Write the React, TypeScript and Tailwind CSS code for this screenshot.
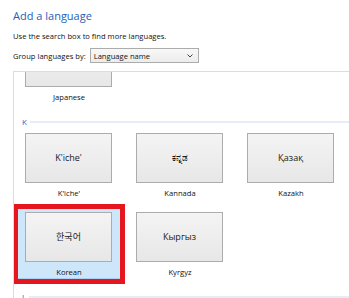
import React from "react";

type Lang = { native: string; name: string; selected?: boolean };

const font = "font-['Segoe_UI','Open_Sans','Noto_Sans_CJK_KR',sans-serif]";

function Tile({ lang }: { lang: Lang }) {
  return (
    <div
      className={
        "relative w-[102px] px-[7px] pt-[3px] border-b " +
        (lang.selected
          ? "bg-[#cde6fa] border-[#a9d0f2] outline-[5px] outline-[#e5161e]"
          : "border-transparent")
      }
    >
      <div className="flex h-[50px] w-[87px] items-center justify-center border border-[#acacac] bg-gradient-to-b from-[#f4f4f4] to-[#e7e7e7] text-[9px] text-[#1a1a1a]">
        {lang.native}
      </div>
      <div className="mt-[4px] h-[12px] text-center text-[7.6px] leading-[12px] text-[#111]">
        {lang.name}
      </div>
    </div>
  );
}

function Heading({ letter }: { letter: string }) {
  return (
    <div className="mt-[13px] flex h-[10px] items-center pl-[8px]">
      <span className="text-[8px] leading-[10px] text-[#4b57d0]">{letter}</span>
      <div className="ml-[3px] h-[2px] flex-1 bg-[#e6edf6]" />
    </div>
  );
}

const kLangs: Lang[] = [
  { native: "K'iche'", name: "K'iche'" },
  { native: "ಕನ್ನಡ", name: "Kannada" },
  { native: "Қазақ", name: "Kazakh" },
  { native: "한국어", name: "Korean", selected: true },
  { native: "Кыргыз", name: "Kyrgyz" },
];

export default function App() {
  return (
    <div className={"h-[298px] w-[349px] overflow-hidden bg-white " + font}>
      <div className="pl-[13px] pt-[8px]">
        <h1 className="text-[11px] leading-[16px] text-[#2561b4]">
          Add a language
        </h1>
        <p className="mt-[6px] text-[7.6px] leading-[12px] text-[#111]">
          Use the search box to find more languages.
        </p>
        <div className="mt-[6px] flex h-[15px] items-center text-[7.6px] leading-[12px] text-[#111]">
          <span className="whitespace-nowrap">Group languages by:</span>
          <div className="ml-[4px] flex h-[15px] w-[109px] items-center justify-between border border-[#acacac] bg-gradient-to-b from-[#f8f8f8] to-[#ececec] pl-[3px] pr-[5px]">
            <span className="whitespace-nowrap">Language name</span>
            <svg width="6" height="4" viewBox="0 0 6 4" fill="none">
              <path d="M0.5 0.5 L3 3 L5.5 0.5" stroke="#444" strokeWidth="1" />
            </svg>
          </div>
        </div>
      </div>

      <div className="ml-[13px] mt-[8px] h-[240px] overflow-hidden border-l border-t border-[#dcdcdc]">
        {/* Japanese tile scrolled mostly out of view; its native label is hidden above */}
        <div className="-mt-[38px] pl-[4px]">
          <Tile lang={{ native: "", name: "Japanese" }} />
        </div>
        <Heading letter="K" />
        <div className="mt-[3px] grid grid-cols-[102px_102px_102px] gap-x-[9px] gap-y-[9px] pl-[4px]">
          {kLangs.map((l) => (
            <Tile key={l.name} lang={l} />
          ))}
        </div>
        <Heading letter="L" />
      </div>
    </div>
  );
}
